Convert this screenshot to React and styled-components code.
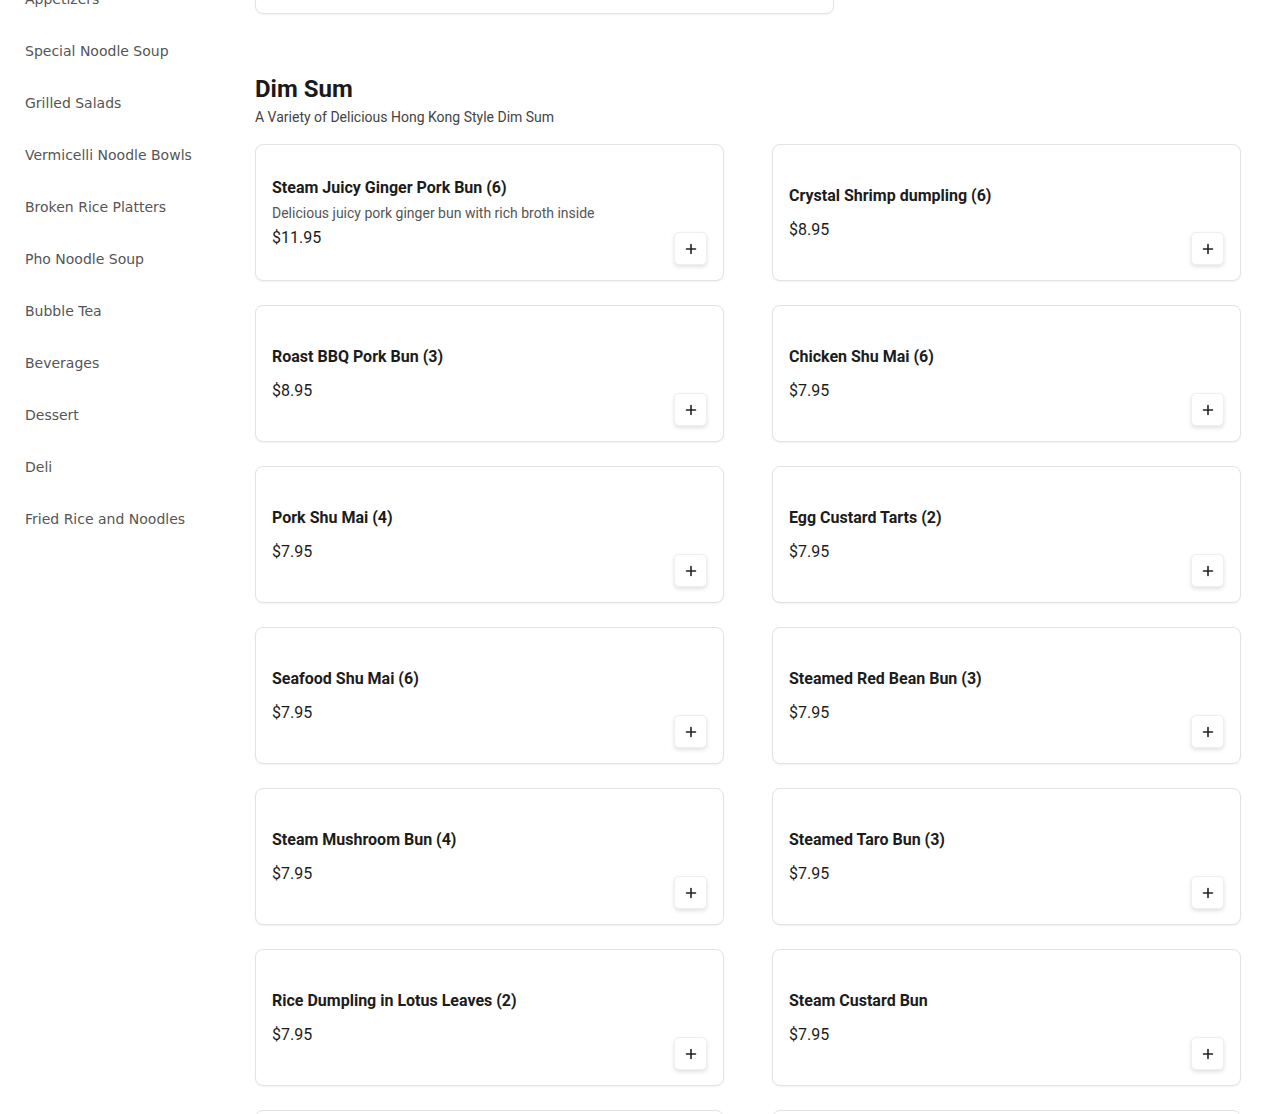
import React from 'react';
import styled, { createGlobalStyle } from 'styled-components';

const GlobalStyle = createGlobalStyle`
  html, body {
    margin: 0;
    padding: 0;
    background: #fff;
    overflow: hidden;
  }
  * {
    box-sizing: border-box;
  }
`;

const CATEGORIES = [
  'Appetizers',
  'Special Noodle Soup',
  'Grilled Salads',
  'Vermicelli Noodle Bowls',
  'Broken Rice Platters',
  'Pho Noodle Soup',
  'Bubble Tea',
  'Beverages',
  'Dessert',
  'Deli',
  'Fried Rice and Noodles',
];

const DIM_SUM = [
  {
    name: 'Steam Juicy Ginger Pork Bun (6)',
    description: 'Delicious juicy pork ginger bun with rich broth inside',
    price: '$11.95',
  },
  { name: 'Crystal Shrimp dumpling (6)', price: '$8.95' },
  { name: 'Roast BBQ Pork Bun (3)', price: '$8.95' },
  { name: 'Chicken Shu Mai (6)', price: '$7.95' },
  { name: 'Pork Shu Mai (4)', price: '$7.95' },
  { name: 'Egg Custard Tarts (2)', price: '$7.95' },
  { name: 'Seafood Shu Mai (6)', price: '$7.95' },
  { name: 'Steamed Red Bean Bun (3)', price: '$7.95' },
  { name: 'Steam Mushroom Bun (4)', price: '$7.95' },
  { name: 'Steamed Taro Bun (3)', price: '$7.95' },
  { name: 'Rice Dumpling in Lotus Leaves (2)', price: '$7.95' },
  { name: 'Steam Custard Bun', price: '$7.95' },
  { name: 'Steamed Chive Dumpling (3)', price: '$7.95' },
  { name: 'Sticky Rice Chicken (1)', price: '$7.95' },
];

const Layout = styled.div`
  display: flex;
  align-items: flex-start;
  margin-top: -27px;
`;

const Sidebar = styled.nav`
  width: 255px;
  flex-shrink: 0;
  padding-left: 25px;
`;

const CategoryLink = styled.a`
  display: block;
  padding: 16px 0;
  line-height: 20px;
  font-family: 'DejaVu Sans', sans-serif;
  font-size: 14px;
  color: #555;
  text-decoration: none;
  cursor: pointer;
`;

const Main = styled.main`
  width: 986px;
  font-family: Roboto, 'Liberation Sans', sans-serif;
  color: #1c1c1c;
`;

const TrailingCard = styled.div`
  width: 579px;
  height: 41px;
  border: 1px solid #e3e3e3;
  border-radius: 8px;
  box-shadow: 0 1px 2px rgba(0, 0, 0, 0.05);
`;

const Section = styled.section`
  margin-top: 59px;
`;

const SectionTitle = styled.h2`
  margin: 0;
  font-size: 24px;
  line-height: 32px;
  font-weight: 700;
  color: #1a1a1a;
`;

const SectionSubtitle = styled.p`
  margin: 2px 0 17px;
  font-size: 14px;
  line-height: 20px;
  color: #444;
`;

const Grid = styled.div`
  display: grid;
  grid-template-columns: repeat(2, 469px);
  column-gap: 48px;
  row-gap: 24px;
`;

const Card = styled.div`
  height: 137px;
  display: flex;
  align-items: center;
  padding: 16px 16px 15px;
  border: 1px solid #e3e3e3;
  border-radius: 8px;
  background: #fff;
  box-shadow: 0 1px 2px rgba(0, 0, 0, 0.05);
`;

const Info = styled.div`
  flex: 1;
  min-width: 0;
`;

const ItemName = styled.div`
  font-size: 16px;
  line-height: 24px;
  font-weight: 700;
  color: #1c1c1c;
  margin-bottom: ${(p) => (p.$withDescription ? '3px' : '10px')};
`;

const ItemDescription = styled.div`
  font-size: 14px;
  line-height: 20px;
  color: #555;
  margin-bottom: 3px;
`;

const ItemPrice = styled.div`
  font-size: 16px;
  line-height: 24px;
  color: #1c1c1c;
`;

const AddButton = styled.button`
  align-self: flex-end;
  width: 33px;
  height: 33px;
  flex-shrink: 0;
  display: flex;
  align-items: center;
  justify-content: center;
  padding: 0;
  border: 1px solid #efefef;
  border-radius: 5px;
  background: #fff;
  box-shadow: 0 2px 4px rgba(0, 0, 0, 0.12);
  color: #222;
  cursor: pointer;
`;

function PlusIcon() {
  return (
    <svg width="12" height="12" viewBox="0 0 12 12" fill="none">
      <path d="M6 1.5v9M1.5 6h9" stroke="currentColor" strokeWidth="1.6" strokeLinecap="round" />
    </svg>
  );
}

function MenuItem({ name, description, price }) {
  return (
    <Card>
      <Info>
        <ItemName $withDescription={!!description}>{name}</ItemName>
        {description && <ItemDescription>{description}</ItemDescription>}
        <ItemPrice>{price}</ItemPrice>
      </Info>
      <AddButton aria-label={`Add ${name}`}>
        <PlusIcon />
      </AddButton>
    </Card>
  );
}

export default function App() {
  return (
    <>
      <GlobalStyle />
      <Layout>
        <Sidebar>
          {CATEGORIES.map((c) => (
            <CategoryLink key={c}>{c}</CategoryLink>
          ))}
        </Sidebar>
        <Main>
          <TrailingCard />
          <Section>
            <SectionTitle>Dim Sum</SectionTitle>
            <SectionSubtitle>A Variety of Delicious Hong Kong Style Dim Sum</SectionSubtitle>
            <Grid>
              {DIM_SUM.map((item) => (
                <MenuItem key={item.name} {...item} />
              ))}
            </Grid>
          </Section>
        </Main>
      </Layout>
    </>
  );
}
